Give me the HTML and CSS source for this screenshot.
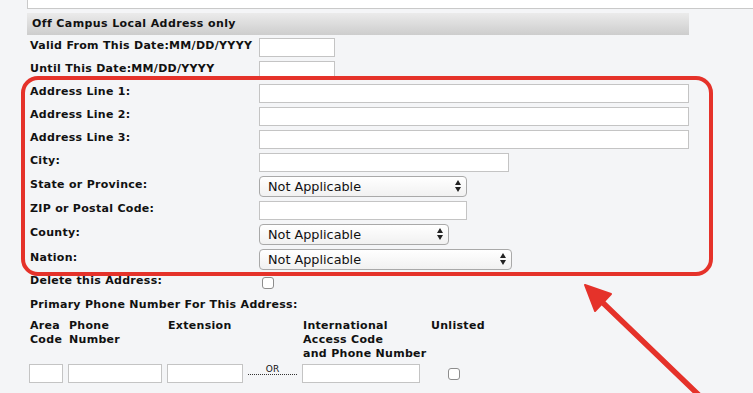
FILE: index.html
```html
<!DOCTYPE html>
<html lang="en">
<head>
  <meta charset="UTF-8" />
  <title>Off Campus Local Address</title>
  <link rel="stylesheet" href="styles.css">
</head>
<body>
  <div class="page">
    <div class="topbox"></div>

    <div class="section">
      <div class="section-head">Off Campus Local Address only</div>

      <div class="form">
        <label>Valid From This Date:MM/DD/YYYY</label>
        <input type="text" class="w-date">

        <label>Until This Date:MM/DD/YYYY</label>
        <input type="text" class="w-date">

        <label>Address Line 1:</label>
        <input type="text" class="w-long">

        <label>Address Line 2:</label>
        <input type="text" class="w-long">

        <label>Address Line 3:</label>
        <input type="text" class="w-long">

        <label>City:</label>
        <input type="text" class="w-city">

        <label>State or Province:</label>
        <div class="select-wrap w-state">
          <select><option>Not Applicable</option></select>
          <svg class="updown" width="6" height="12" viewBox="0 0 6 12"><path d="M3 0 L6 5 L0 5 Z M0 7 L6 7 L3 12 Z" fill="#222"/></svg>
        </div>

        <label>ZIP or Postal Code:</label>
        <input type="text" class="w-state">

        <label>County:</label>
        <div class="select-wrap w-county">
          <select><option>Not Applicable</option></select>
          <svg class="updown" width="6" height="12" viewBox="0 0 6 12"><path d="M3 0 L6 5 L0 5 Z M0 7 L6 7 L3 12 Z" fill="#222"/></svg>
        </div>

        <label>Nation:</label>
        <div class="select-wrap w-nation">
          <select><option>Not Applicable</option></select>
          <svg class="updown" width="6" height="12" viewBox="0 0 6 12"><path d="M3 0 L6 5 L0 5 Z M0 7 L6 7 L3 12 Z" fill="#222"/></svg>
        </div>

        <label class="short">Delete this Address:</label>
        <input type="checkbox" class="check">

        <label class="full">Primary Phone Number For This Address:</label>
      </div>

      <div class="phone">
        <div class="ph-head">Area<br>Code</div>
        <div class="ph-head">Phone<br>Number</div>
        <div class="ph-head">Extension</div>
        <div></div>
        <div class="ph-head">International<br>Access Code<br>and Phone Number</div>
        <div class="ph-head unlisted">Unlisted</div>

        <input type="text">
        <input type="text">
        <input type="text">
        <div class="or">OR</div>
        <input type="text">
        <div class="unlisted"><input type="checkbox" class="check"></div>
      </div>

      <div class="next-row">
        <span class="c1">Phone Type</span>
        <span class="c2">Long Distance Telephone</span>
        <span class="c3">International Access</span>
        <span class="c4">Unlisted Dial Code</span>
      </div>
    </div>
  </div>

  <!-- annotation drawn over the form -->
  <div class="callout"></div>
  <svg class="arrow" width="753" height="393" viewBox="0 0 753 393">
    <line x1="705" y1="401" x2="600" y2="300" stroke="#e5322a" stroke-width="5.5" stroke-linecap="round"/>
    <polygon points="585,285 611,294 595,311" fill="#e5322a" stroke="#e5322a" stroke-width="2" stroke-linejoin="round"/>
  </svg>
</body>
</html>
```

FILE: styles.css
```css
html, body {
  margin: 0;
  padding: 0;
  height: 100%;
  overflow: hidden;
}

body {
  background-color: #f4f5f7;
  font-family: "DejaVu Sans", Verdana, sans-serif;
  color: #111;
  position: relative;
}

.page {
  padding-left: 27px;
}

/* === White box cut off at the top === */
.topbox {
  height: 8px;
  background: #fff;
  border: 1px solid #c9c9c9;
  border-top: none;
  border-right: none;
}

.section {
  width: 662px;
  margin-top: 4px;
}

.section-head {
  height: 22px;
  line-height: 22px;
  padding-left: 5px;
  font-size: 11px;
  font-weight: bold;
  letter-spacing: 0.4px;
  background: linear-gradient(#ebebeb, #cdcdcd);
}

/* === Label / field grid === */
.form {
  display: grid;
  grid-template-columns: 229px 1fr;
  row-gap: 4px;
  align-items: center;
  padding-left: 3px;
  margin-top: 3px;
}

label, .ph-head, .next-row {
  font-size: 11px;
  font-weight: bold;
  letter-spacing: 0.3px;
  line-height: 14px;
}

.form label {
  margin-top: -3px;
}

.form label.short {
  margin-top: -2px;
}

.form label.full {
  grid-column: 1 / 3;
  height: 22px;
  line-height: 22px;
  margin-top: 0;
}

input[type="text"] {
  box-sizing: border-box;
  height: 19px;
  margin: 0;
  border: 1px solid #c4c4c4;
  background: #fff;
  padding: 0 3px;
}

.w-date { width: 76px; }
.w-long { width: 430px; }
.w-city { width: 250px; }
.w-state { width: 208px; }
.w-county { width: 190px; }
.w-nation { width: 253px; }

.select-wrap {
  position: relative;
  height: 21px;
}

.select-wrap select {
  appearance: none;
  -webkit-appearance: none;
  box-sizing: border-box;
  width: 100%;
  height: 21px;
  margin: 0;
  padding: 0 0 0 8px;
  border: 1px solid #a9a9a9;
  border-radius: 4px;
  background: linear-gradient(#ffffff, #f1f1f1);
  font-family: "DejaVu Sans", Verdana, sans-serif;
  font-size: 12.8px;
  color: #111;
}

.updown {
  position: absolute;
  right: 6px;
  top: 4px;
}

.check {
  appearance: none;
  -webkit-appearance: none;
  box-sizing: border-box;
  width: 12px;
  height: 12px;
  margin: 3px 0 1px 3px;
  border: 1px solid #8d8d8d;
  border-radius: 3px;
  background: #fff;
}

/* === Phone number table === */
.phone {
  display: grid;
  grid-template-columns: 34px 94px 76px 49px 118px 53px;
  column-gap: 5px;
  row-gap: 3px;
  padding-left: 2px;
  margin-top: 3px;
}

.phone .ph-head {
  padding-left: 1px;
  white-space: nowrap;
}

.phone .unlisted {
  margin-left: 5px;
  text-align: center;
}

.phone .unlisted .check {
  margin: 4px 0 0 0;
}

.phone input[type="text"] {
  width: 100%;
}

.or {
  align-self: start;
  height: 10px;
  line-height: 10px;
  font-size: 9px;
  text-align: center;
  border-bottom: 1px dotted #333;
}

.next-row {
  position: relative;
  height: 14px;
  margin-top: 7px;
  padding-left: 3px;
}

.next-row span {
  position: absolute;
  top: 0;
}

.next-row .c1 { left: 3px; }
.next-row .c2 { left: 255px; }
.next-row .c3 { left: 438px; }
.next-row .c4 { left: 566px; }

/* === Red annotation === */
.callout {
  position: absolute;
  left: 21px;
  top: 76px;
  width: 684px;
  height: 192px;
  border: 4px solid #e5322a;
  border-radius: 17px;
}

.arrow {
  position: absolute;
  left: 0;
  top: 0;
}
```
